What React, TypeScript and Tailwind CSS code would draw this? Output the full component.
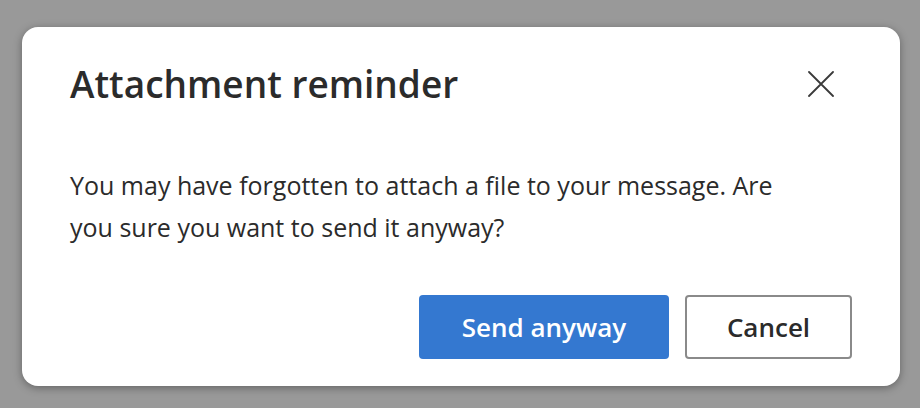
import React from 'react';

const CloseIcon: React.FC = () => (
  <svg width="26" height="26" viewBox="0 0 26 26" fill="none" stroke="currentColor" strokeWidth="1.8" strokeLinecap="round">
    <path d="M1 1L25 25M25 1L1 25" />
  </svg>
);

const App: React.FC = () => {
  return (
    <div className="w-[920px] h-[408px] bg-[#999999] pl-[22px] pt-[27px] font-['Open_Sans',sans-serif]">
      {/* Dialog card */}
      <div className="w-[878px] h-[359px] bg-white rounded-[16px] shadow-[0_2px_8px_rgba(0,0,0,0.35)] flex flex-col px-[48px] pt-[33px] pb-[27px]">
        <div className="flex items-center justify-between h-[48px]">
          <h1 className="text-[37px] leading-[48px] font-semibold text-[#2b2b2b]">
            Attachment reminder
          </h1>
          <button className="w-[40px] h-[40px] flex items-center justify-center mr-[11px] text-[#3a3a3a]" aria-label="Close">
            <CloseIcon />
          </button>
        </div>

        <p className="mt-[56px] max-w-[740px] text-[25px] leading-[42px] text-[#2b2b2b]">
          You may have forgotten to attach a file to your message. Are you sure you want to send it anyway?
        </p>

        <div className="mt-auto flex justify-end gap-[16px]">
          <button className="w-[250px] h-[64px] rounded-[4px] bg-[#3478d0] text-white text-[26px] font-semibold">
            Send anyway
          </button>
          <button className="w-[167px] h-[64px] rounded-[4px] border-2 border-[#8a8a8a] bg-white text-[#2b2b2b] text-[26px] font-semibold">
            Cancel
          </button>
        </div>
      </div>
    </div>
  );
};

export default App;
